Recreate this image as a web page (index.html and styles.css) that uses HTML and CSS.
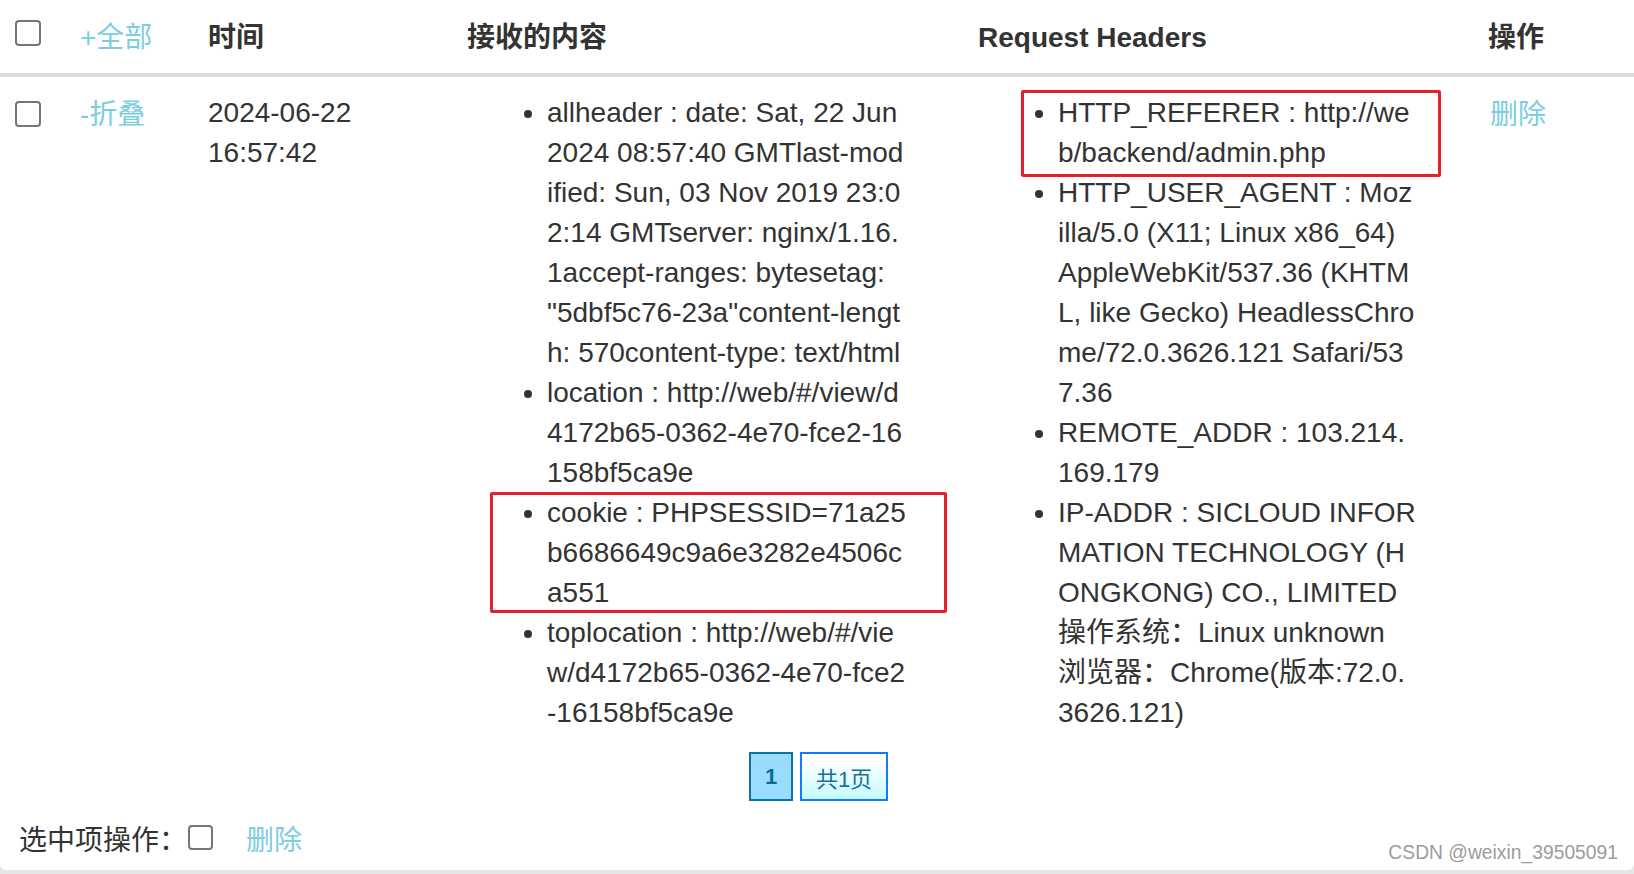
FILE: index.html
```html
<!DOCTYPE html>
<html lang="zh-CN">
<head>
<meta charset="utf-8">
<title>接收的内容</title>
<link rel="stylesheet" href="styles.css">
</head>
<body>
<div class="card">
  <table class="log">
    <colgroup>
      <col class="w-check">
      <col class="w-toggle">
      <col class="w-time">
      <col class="w-content">
      <col class="w-headers">
      <col>
    </colgroup>
    <thead>
      <tr>
        <th class="cell-check"><input type="checkbox" class="box"></th>
        <th><a class="link">+全部</a></th>
        <th>时间</th>
        <th>接收的内容</th>
        <th>Request Headers</th>
        <th>操作</th>
      </tr>
    </thead>
    <tbody>
      <tr>
        <td class="cell-check"><input type="checkbox" class="box"></td>
        <td><a class="link link-cjk">-折叠</a></td>
        <td>2024-06-22 16:57:42</td>
        <td>
          <ul class="kv">
            <li>allheader : date: Sat, 22 Jun 2024 08:57:40 GMTlast-modified: Sun, 03 Nov 2019 23:02:14 GMTserver: nginx/1.16.1accept-ranges: bytesetag: "5dbf5c76-23a"content-length: 570content-type: text/html</li>
            <li>location : http://web/#/view/d4172b65-0362-4e70-fce2-16158bf5ca9e</li>
            <li>cookie : PHPSESSID=71a25b6686649c9a6e3282e4506ca551</li>
            <li>toplocation : http://web/#/view/d4172b65-0362-4e70-fce2-16158bf5ca9e</li>
          </ul>
        </td>
        <td>
          <ul class="kv">
            <li>HTTP_REFERER : http://web/backend/admin.php</li>
            <li>HTTP_USER_AGENT : Mozilla/5.0 (X11; Linux x86_64) AppleWebKit/537.36 (KHTML, like Gecko) HeadlessChrome/72.0.3626.121 Safari/537.36</li>
            <li>REMOTE_ADDR : 103.214.169.179</li>
            <li>IP-ADDR : SICLOUD INFORMATION TECHNOLOGY (HONGKONG) CO., LIMITED<br>操作系统：Linux unknown<br>浏览器：Chrome(版本:72.0.3626.121)</li>
          </ul>
        </td>
        <td class="cell-op"><a class="link link-cjk">删除</a></td>
      </tr>
    </tbody>
  </table>

  <div class="pager">
    <span class="page current">1</span>
    <span class="page total">共1页</span>
  </div>

  <div class="batch">
    <span>选中项操作：</span>
    <input type="checkbox" class="box box-small">
    <a class="link batch-del">删除</a>
  </div>

  <div class="mark mark-cookie"></div>
  <div class="mark mark-referer"></div>
  <div class="watermark">CSDN @weixin_39505091</div>
</div>
</body>
</html>
```

FILE: styles.css
```css
html, body {
  margin: 0;
  padding: 0;
}

body {
  background: #e6e6e6;
  min-height: 874px;
  font-family: "Liberation Sans", "Noto Sans CJK SC", sans-serif;
  font-size: 28px;
  color: #333;
}

.card {
  position: relative;
  background: #fff;
  border-radius: 0 0 6px 6px;
  padding-bottom: 9px;
}

.log {
  width: 100%;
  border-collapse: collapse;
  table-layout: fixed;
}

.w-check { width: 68px; }
.w-toggle { width: 128px; }
.w-time { width: 259px; }
.w-content { width: 511px; }
.w-headers { width: 510px; }

.log th,
.log td {
  text-align: left;
  vertical-align: top;
  line-height: 40px;
  padding: 0 12px;
}

.log th {
  font-weight: 700;
  padding-top: 18px;
  padding-bottom: 15px;
  border-bottom: 4px solid #dcdcdc;
}

.log td {
  padding-top: 15.5px;
  padding-bottom: 0;
}

.log .cell-check {
  padding-left: 15px;
  padding-right: 0;
}

.log td.cell-op {
  padding-left: 14px;
}

.box {
  appearance: none;
  -webkit-appearance: none;
  display: block;
  width: 26px;
  height: 26px;
  margin: 0;
  border: 2px solid #767676;
  border-radius: 4px;
  background: #fff;
  box-sizing: border-box;
}

th.cell-check .box {
  margin-top: 2px;
}

td.cell-check .box {
  margin-top: 8px;
}

.link {
  color: #7dcde0;
  font-weight: 400;
  text-decoration: none;
  cursor: pointer;
}

.link-cjk {
  position: relative;
  top: 2px;
}

.kv {
  margin: 0 0 0 40px;
  padding: 0 0 0 40px;
  width: 359.8px;
  word-break: break-all;
}

.kv li {
  line-height: 40px;
}

.pager {
  display: flex;
  justify-content: center;
  gap: 7px;
  margin-top: 19.5px;
  padding-left: 3px;
}

.page {
  display: flex;
  align-items: center;
  justify-content: center;
  height: 49px;
  box-sizing: border-box;
  font-size: 22px;
  border: 2px solid;
}

.page.current {
  width: 44px;
  background: #9adcfd;
  border-color: #0b72a4;
  color: #0d6a96;
  font-weight: 700;
}

.page.total {
  width: 88px;
  background: linear-gradient(#ffffff 15%, #c6fbff);
  border-color: #127bfe;
  color: #16709f;
}

.batch {
  display: flex;
  align-items: center;
  margin-top: 20px;
  padding-left: 19px;
  height: 40px;
  line-height: 40px;
}

.box-small {
  width: 25px;
  height: 25px;
  margin: -7px 0 0 1px;
}

.batch-del {
  margin-left: 33px;
}

.mark {
  position: absolute;
  border: 3px solid #e6202b;
  border-radius: 2px;
  box-sizing: border-box;
}

.mark-cookie {
  left: 490px;
  top: 492px;
  width: 457px;
  height: 121px;
}

.mark-referer {
  left: 1021px;
  top: 90px;
  width: 420px;
  height: 87px;
}

.watermark {
  position: absolute;
  right: 16px;
  top: 841px;
  font-size: 19.3px;
  line-height: 24px;
  color: #9c9c9c;
  text-shadow: 0 0 1px #fff;
}
```
